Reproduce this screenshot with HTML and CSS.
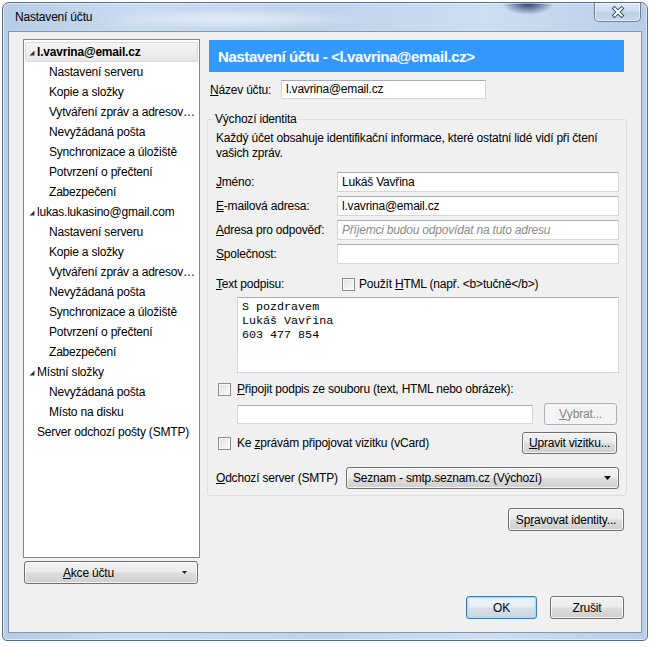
FILE: index.html
```html
<!DOCTYPE html>
<html lang="cs">
<head>
<meta charset="utf-8">
<title>Nastavení účtu</title>
<link rel="stylesheet" href="styles.css">
</head>
<body>
<div class="desktop">
  <div class="window">
    <div class="titlebar">
      <span class="title">Nastavení účtu</span>
      <div class="close">
        <svg width="14" height="12" viewBox="0 0 14 12"><path d="M3.5 2.5 L10.5 9.5 M10.5 2.5 L3.5 9.5" stroke="#3d4f66" stroke-width="4" stroke-linecap="square"/><path d="M3.5 2.5 L10.5 9.5 M10.5 2.5 L3.5 9.5" stroke="#ffffff" stroke-width="2" stroke-linecap="square"/></svg>
      </div>
    </div>
    <div class="client">
      <div class="main">
        <div class="leftcol">
          <ul class="tree">
            <li class="row top selected"><svg class="tri" width="6" height="6" viewBox="0 0 6 6"><polygon points="5.5,0.5 5.5,5.5 0.5,5.5" fill="#333"/></svg><span>l.vavrina@email.cz</span></li>
            <li class="row sub">Nastavení serveru</li>
            <li class="row sub">Kopie a složky</li>
            <li class="row sub">Vytváření zpráv a adresování</li>
            <li class="row sub">Nevyžádaná pošta</li>
            <li class="row sub">Synchronizace a úložiště</li>
            <li class="row sub">Potvrzení o přečtení</li>
            <li class="row sub">Zabezpečení</li>
            <li class="row top"><svg class="tri" width="6" height="6" viewBox="0 0 6 6"><polygon points="5.5,0.5 5.5,5.5 0.5,5.5" fill="#333"/></svg><span>lukas.lukasino@gmail.com</span></li>
            <li class="row sub">Nastavení serveru</li>
            <li class="row sub">Kopie a složky</li>
            <li class="row sub">Vytváření zpráv a adresování</li>
            <li class="row sub">Nevyžádaná pošta</li>
            <li class="row sub">Synchronizace a úložiště</li>
            <li class="row sub">Potvrzení o přečtení</li>
            <li class="row sub">Zabezpečení</li>
            <li class="row top"><svg class="tri" width="6" height="6" viewBox="0 0 6 6"><polygon points="5.5,0.5 5.5,5.5 0.5,5.5" fill="#333"/></svg><span>Místní složky</span></li>
            <li class="row sub">Nevyžádaná pošta</li>
            <li class="row sub">Místo na disku</li>
            <li class="row leaf">Server odchozí pošty (SMTP)</li>
          </ul>
          <button class="btn akce"><span><u>A</u>kce účtu</span><svg class="akce-arrow" width="5" height="3" viewBox="0 0 5 3"><polygon points="0,0 5,0 2.5,3" fill="#222"/></svg></button>
        </div>
        <div class="pane">
          <div class="header">Nastavení účtu - &lt;l.vavrina@email.cz&gt;</div>
          <div class="namerow">
            <label class="namelabel"><u>N</u>ázev účtu:</label>
            <div class="input nameinput">l.vavrina@email.cz</div>
          </div>
          <fieldset class="group">
            <legend>Výchozí identita</legend>
            <p class="desc">Každý účet obsahuje identifikační informace, které ostatní lidé vidí při čtení vašich zpráv.</p>
            <div class="fields">
              <label><u>J</u>méno:</label><div class="input">Lukáš Vavřina</div>
              <label><u>E</u>-mailová adresa:</label><div class="input">l.vavrina@email.cz</div>
              <label><u>A</u>dresa pro odpověď:</label><div class="input placeholder">Příjemci budou odpovídat na tuto adresu</div>
              <label><u>S</u>polečnost:</label><div class="input"></div>
            </div>
            <div class="sigrow">
              <label class="siglabel"><u>T</u>ext podpisu:</label>
              <span class="check html-check"></span>
              <span>Použít <u>H</u>TML (např. &lt;b&gt;tučně&lt;/b&gt;)</span>
            </div>
            <div class="textarea">S pozdravem<br>Lukáš Vavřina<br>603 477 854</div>
            <div class="checkrow attach">
              <span class="check"></span>
              <span><u>P</u>řipojit podpis ze souboru (text, HTML nebo obrázek):</span>
            </div>
            <div class="filerow">
              <div class="input fileinput"></div>
              <button class="btn disabled vybrat"><u>V</u>ybrat...</button>
            </div>
            <div class="checkrow vcard">
              <span class="check"></span>
              <span>Ke <u>z</u>právám připojovat vizitku (vCard)</span>
              <button class="btn upravit"><u>U</u>pravit vizitku...</button>
            </div>
            <div class="smtprow">
              <label class="smtplabel"><u>O</u>dchozí server (SMTP)</label>
              <div class="btn select"><span>Seznam - smtp.seznam.cz (Výchozí)</span><svg width="7" height="4" viewBox="0 0 7 4"><polygon points="0,0 7,0 3.5,4" fill="#111"/></svg></div>
            </div>
          </fieldset>
          <button class="btn spravovat">Sp<u>r</u>avovat identity...</button>
        </div>
      </div>
      <div class="footer">
        <button class="btn default ok">OK</button>
        <button class="btn cancel">Zrušit</button>
      </div>
    </div>
  </div>
</div>
</body>
</html>
```
FILE: styles.css
```css
* { box-sizing: border-box; }
html, body { margin: 0; padding: 0; }
body {
  width: 654px;
  height: 647px;
  overflow: hidden;
  background: #ffffff;
  font-family: "Liberation Sans", Arial, sans-serif;
  font-size: 12px;
  letter-spacing: -0.2px;
  color: #000;
}
u { text-decoration: underline; text-underline-offset: 1px; }

.desktop { padding: 2px 0 0 2px; }

.window {
  width: 646px;
  height: 639px;
  border: 1px solid #5b6b80;
  border-radius: 7px 7px 5px 5px;
  padding: 0 5px 7px 5px;
  display: flex;
  flex-direction: column;
  background:
    radial-gradient(ellipse 26px 12px at 525px 0px, rgba(18,38,88,0.9), rgba(18,38,88,0) 100%),
    radial-gradient(ellipse 140px 10px at 230px 16px, rgba(255,255,255,0.55), rgba(255,255,255,0) 100%),
    linear-gradient(to right, #b6cce6 0%, #c9dbef 20%, #bfd3eb 50%, #cddef1 75%, #b8cee8 100%);
  box-shadow: inset 0 0 0 1px rgba(255,255,255,0.55);
}

.titlebar {
  height: 28px;
  display: flex;
  justify-content: space-between;
  align-items: flex-start;
  padding: 0 1px 0 7px;
}
.title {
  margin-top: 4px;
  line-height: 20px;
  font-size: 12px;
  color: #000;
}
.close {
  width: 47px;
  height: 19px;
  border: 1px solid #6f8096;
  border-top: none;
  border-radius: 0 0 5px 5px;
  background: linear-gradient(to bottom, #dde8f5 0%, #cbdaee 50%, #bdd0e8 51%, #c9d9ee 100%);
  box-shadow: inset 0 0 0 1px rgba(255,255,255,0.6);
  display: flex;
  align-items: center;
  justify-content: center;
}

.client {
  flex: 1;
  background: #f0f0f0;
  border: 1px solid #8597ad;
  display: flex;
  flex-direction: column;
}

.main {
  display: flex;
  gap: 7px;
  padding: 7px 13px 0 14px;
}

.leftcol {
  width: 177px;
  display: flex;
  flex-direction: column;
  gap: 3px;
}

.tree {
  list-style: none;
  margin: 0;
  height: 519px;
  padding: 2px 1px 1px 0;
  background: #fff;
  border: 1px solid #828790;
}
.row {
  height: 20px;
  line-height: 20px;
  white-space: nowrap;
  overflow: hidden;
  text-overflow: ellipsis;
  color: #000;
}
.row.top {
  display: flex;
  align-items: center;
  padding-left: 5px;
}
.row.top span { margin-left: 2px; overflow: hidden; text-overflow: ellipsis; }
.tri { flex: none; margin-top: 1px; }
.row.sub { padding-left: 25px; }
.row.leaf { padding-left: 13px; }
.row.selected {
  font-weight: bold;
  background: linear-gradient(to bottom, #f5f5f5, #e6e6e6);
  border: 1px solid #dadada;
  border-radius: 2px;
  padding-left: 4px;
  margin-left: 1px;
}
.row.selected .tri { margin-left: -1px; }

.btn {
  font-family: inherit;
  font-size: 12px;
  letter-spacing: -0.2px;
  color: #000;
  border: 1px solid #707070;
  border-radius: 3px;
  background: linear-gradient(to bottom, #f2f2f2 0%, #ebebeb 48%, #dddddd 52%, #cfcfcf 100%);
  box-shadow: inset 0 0 0 1px rgba(255,255,255,0.75);
  padding: 0;
  margin: 0;
  display: flex;
  align-items: center;
  justify-content: center;
}
.btn.disabled {
  border-color: #adb2b5;
  background: #f4f4f4;
  color: #838383;
  box-shadow: none;
}
.btn.default {
  border-color: #3c7fb1;
  box-shadow: inset 0 0 0 1px #a8dbf5, inset 0 0 2px 1px rgba(150,210,240,0.6);
  background: linear-gradient(to bottom, #eef5fa 0%, #e6eef4 48%, #d6e1e9 52%, #c9d6df 100%);
}

.akce {
  height: 23px;
  width: 174px;
  margin-left: 1px;
  justify-content: flex-start;
  padding-left: 38px;
}
.akce-arrow { margin-left: auto; margin-right: 10px; }

.pane {
  width: 421px;
  display: flex;
  flex-direction: column;
}

.header {
  margin: 1px 4px 0 2px;
  height: 32px;
  background: #3399ff;
  color: #fff;
  font-weight: bold;
  font-size: 15px;
  letter-spacing: -0.4px;
  padding-left: 9px;
  display: flex;
  align-items: center;
}

.namerow {
  margin-top: 8px;
  padding-left: 3px;
  display: flex;
  align-items: center;
}
.namelabel { width: 71px; }

.input {
  height: 20px;
  background: #fff;
  border: 1px solid #d2d5da;
  border-top-color: #abadb3;
  padding: 0 4px;
  line-height: 18px;
  white-space: nowrap;
  overflow: hidden;
}
.nameinput { width: 205px; height: 19px; line-height: 17px; }
.placeholder { color: #8b8b8b; font-style: italic; }

.group {
  margin: 12px 1px 0 0;
  padding: 4px 7px 6px 8px;
  border: 1px solid #d5dfe5;
  border-radius: 3px;
  min-width: 0;
}
.group legend {
  padding: 0 1px;
  margin-left: -2px;
  line-height: 16px;
}
.desc {
  margin: 0;
  line-height: 15px;
}

.fields {
  margin-top: 11px;
  display: grid;
  grid-template-columns: 121px 282px;
  grid-auto-rows: 20px;
  row-gap: 4px;
  align-items: center;
}

.sigrow {
  margin-top: 10px;
  height: 20px;
  display: flex;
  align-items: center;
}
.siglabel { width: 126px; }

.check {
  flex: none;
  width: 13px;
  height: 13px;
  border: 1px solid #8e8f8f;
  background: linear-gradient(135deg, #dcdee2 0%, #f4f4f4 70%, #ffffff 100%);
  box-shadow: inset 0 0 0 1px #f6f6f6;
  margin-right: 4px;
}

.textarea {
  margin: 3px 0 0 21px;
  width: 382px;
  height: 76px;
  background: #fff;
  border: 1px solid #d2d5da;
  border-top-color: #abadb3;
  padding: 2px 4px;
  font-family: "Liberation Mono", "Courier New", monospace;
  font-size: 11.7px;
  letter-spacing: 0;
  line-height: 14px;
}

.checkrow {
  display: flex;
  align-items: center;
  padding-left: 2px;
}
.checkrow .check { margin-right: 6px; }
.attach { margin-top: 7px; height: 18px; }

.filerow {
  margin-top: 5px;
  height: 22px;
  padding-left: 21px;
  display: flex;
  align-items: center;
}
.fileinput { width: 296px; height: 19px; }
.vybrat { margin-left: 11px; width: 73px; height: 22px; }

.vcard { margin-top: 7px; height: 22px; }
.upravit { margin-left: auto; margin-right: 2px; width: 95px; height: 22px; }

.smtprow {
  margin-top: 13px;
  display: flex;
  align-items: center;
}
.smtplabel { width: 130px; }
.select {
  width: 273px;
  height: 22px;
  justify-content: space-between;
  padding: 0 7px 0 6px;
}

.spravovat {
  align-self: flex-end;
  margin: 12px 4px 0 0;
  width: 116px;
  height: 23px;
}

.footer {
  display: flex;
  justify-content: flex-end;
  gap: 13px;
  padding: 12px 17px 0 0;
}
.ok { width: 71px; height: 23px; }
.cancel { width: 74px; height: 23px; }
```
